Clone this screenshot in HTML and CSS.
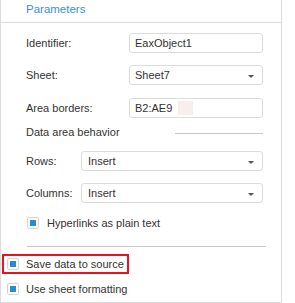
FILE: index.html
```html
<!doctype html>
<html>

<head>
    <title>Parameters</title>
    <link rel="stylesheet" href="styles.css">
</head>

<body>
    <div class="panel">
        <div class="panelHead">Parameters</div>

        <div class="group">
            <div class="row">
                <label class="label">Identifier:</label>
                <div class="field">EaxObject1</div>
            </div>
            <div class="row">
                <label class="label">Sheet:</label>
                <div class="field select">Sheet7<span class="arrow"></span></div>
            </div>
            <div class="row">
                <label class="label">Area borders:</label>
                <div class="field">B2:AE9<span class="swatch"></span></div>
            </div>

            <div class="sectionTitle">
                <span>Data area behavior</span>
                <span class="sectionLine"></span>
            </div>

            <div class="row sub">
                <label class="label short">Rows:</label>
                <div class="field select">Insert<span class="arrow"></span></div>
            </div>
            <div class="row sub">
                <label class="label short">Columns:</label>
                <div class="field select">Insert<span class="arrow"></span></div>
            </div>

            <div class="check inner">
                <span class="box"></span>
                <span>Hyperlinks as plain text</span>
            </div>

            <div class="divider"></div>
        </div>

        <div class="check outer marked">
            <span class="box"></span>
            <span>Save data to source</span>
        </div>
        <div class="check outer">
            <span class="box"></span>
            <span>Use sheet formatting</span>
        </div>
    </div>
</body>

</html>
```

FILE: styles.css
```css
* {
    margin: 0;
    padding: 0;
    box-sizing: border-box;
}

body {
    font: 11px "Liberation Sans", Arial, sans-serif;
    color: #333;
    background: #fff;
}

.panel {
    width: 282px;
    height: 303px;
    border: solid 1px #dcdcdc;
    border-top: none;
}

.panelHead {
    height: 23px;
    padding-left: 25px;
    padding-top: 3px;
    font-size: 11.5px;
    color: #3a8fd8;
    border-bottom: solid 1px #dcdcdc;
}

.group {
    padding: 10px 18px 0 25px;
}

.row {
    display: flex;
    align-items: center;
    height: 20px;
    margin-bottom: 12px;
}

.row + .row {
    margin-bottom: 13px;
}

.label {
    width: 103px;
    flex-shrink: 0;
}

.label.short {
    width: 55px;
}

.field {
    flex: 1;
    height: 20px;
    border: solid 1px #dcdcdc;
    border-radius: 3px;
    padding-left: 5px;
    display: flex;
    align-items: center;
}

.select {
    justify-content: space-between;
    padding-right: 8px;
}

.row.sub .select {
    padding-left: 6px;
}

.arrow {
    width: 0;
    height: 0;
    border-left: 3px solid transparent;
    border-right: 3px solid transparent;
    border-top: 3px solid #555;
    margin-top: 2px;
}

.swatch {
    width: 15px;
    height: 14px;
    margin-left: 6px;
    background: #f8eeee;
}

.sectionTitle {
    display: flex;
    align-items: center;
    margin-top: -7px;
    height: 16px;
    margin-bottom: 11px;
}

.sectionLine {
    flex: 1;
    margin-left: 55px;
    border-top: solid 1px #c8c8c8;
    margin-top: 2px;
}

.check {
    display: flex;
    align-items: center;
    height: 20px;
}

.box {
    width: 12px;
    height: 12px;
    border: solid 1px #d4d4d4;
    border-radius: 2px;
    padding: 2px;
    margin-right: 7px;
    background: #fff;
}

.box::after {
    content: "";
    display: block;
    width: 6px;
    height: 6px;
    background: #2a8ad4;
}

.check.inner {
    padding-left: 1px;
    margin-top: -3px;
}

.check.inner .box {
    margin-right: 8px;
}

.divider {
    margin-top: 13px;
    margin-left: 1px;
    border-top: solid 1px #c8c8c8;
    margin-right: -3px;
}

.check.outer {
    padding-left: 6px;
}

.check.marked {
    display: inline-flex;
    margin-top: 7px;
    margin-left: 1px;
    padding-left: 3px;
    padding-right: 3px;
    border: solid 2px #e8131f;
}

.check.marked + .check {
    margin-top: 5px;
}
```
